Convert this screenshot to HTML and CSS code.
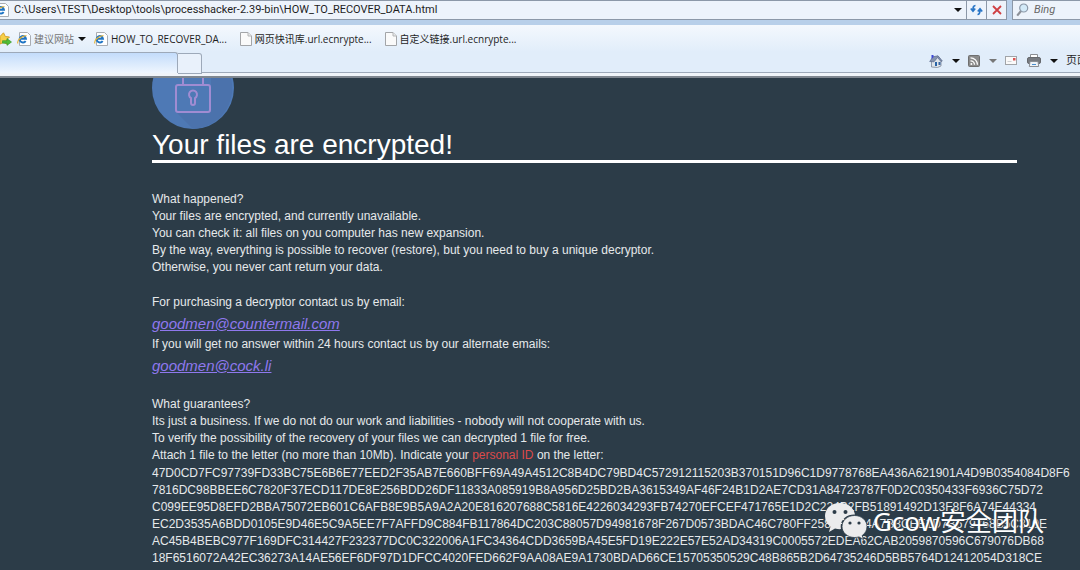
FILE: index.html
```html
<!DOCTYPE html>
<html lang="en">
<head>
<meta charset="utf-8">
<title>HOW_TO_RECOVER_DATA.html</title>
<link rel="stylesheet" href="styles.css">
</head>
<body>
<svg class="defs" aria-hidden="true">
  <defs>
    <symbol id="ie" viewBox="0 0 14 14">
      <path d="M2.500 .5h8l3 3v10h-11z" fill="#fff" stroke="#a9adb3"/>
      <path d="M8.600 8.900a3.200 3.200 0 1 1 .4-2.100H3.200" fill="none" stroke="#1f74c4" stroke-width="1.900"/>
      <path d="M1 11.500C-.5 9 4 4 9.500 3.500" fill="none" stroke="#e8b535" stroke-width="1.100"/>
    </symbol>
    <symbol id="page" viewBox="0 0 12 14">
      <path d="M.5.5h7.500l3.500 3.500v9.500H.5z" fill="#fafafa" stroke="#a3a5a8"/>
      <path d="M8 .5V4h3.500" fill="#e9e9e9" stroke="#b4b6b8"/>
    </symbol>
  </defs>
</svg>
<header class="browser">
  <div class="address-row">
    <div class="address">
      <svg class="ie"><use href="#ie"/></svg>
      <input class="url" type="text" aria-label="Address" value="C:\Users\TEST\Desktop\tools\processhacker-2.39-bin\HOW_TO_RECOVER_DATA.html">
      <button class="drop" aria-label="Show history"><i class="arrow"></i></button>
      <button class="nav" aria-label="Refresh"><svg width="13" height="12" viewBox="0 0 13 12"><path d="M5.500 1.500C3.500 1.500 3 3 3 6M.8 4.500 3 7.200l2.200-2.700M7.500 10.500c2 0 2.500-1.500 2.500-4.500M7.800 7.500 10 4.800l2.200 2.700" fill="none" stroke="#2a76c6" stroke-width="1.700"/></svg></button>
      <button class="nav" aria-label="Stop"><svg width="10" height="10" viewBox="0 0 10 10"><path d="M1 1l8 8M9 1 1 9" stroke="#cf3f42" stroke-width="1.800"/></svg></button>
    </div>
    <div class="search">
      <svg width="13" height="14" viewBox="0 0 13 14"><path d="M5 8 1.200 12.600" stroke="#8d9198" stroke-width="2.200"/><circle cx="7.700" cy="5" r="4" fill="#d3eaf8" stroke="#8c98a8" stroke-width="1.200"/></svg>
      <input class="query" type="text" aria-label="Search" placeholder="Bing">
    </div>
  </div>
  <nav class="favorites">
    <svg class="star" width="12" height="14" viewBox="0 0 12 14"><path d="M3.500.8 5.300 4.500l4.200.5-3 3 .7 4.200L3.500 10.300 0 12V4.500z" fill="#f7d048" stroke="#d5a12b"/><path d="M2.500 8.700h4.500V6.500L11.500 10 7 13.400v-2.200H2.500z" fill="#52bd37" stroke="#30932a" stroke-width=".6"/></svg>
    <button class="fav suggested"><svg class="ie"><use href="#ie"/></svg><span lang="zh">建议网站</span><i class="arrow"></i></button>
    <button class="fav current"><svg class="ie"><use href="#ie"/></svg>HOW_TO_RECOVER_DA...</button>
    <button class="fav feed"><svg class="page"><use href="#page"/></svg>网页快讯库.url.ecnrypte...</button>
    <button class="fav"><svg class="page"><use href="#page"/></svg>自定义链接.url.ecnrypte...</button>
  </nav>
  <div class="tab-row">
    <button class="tab" aria-label="Current tab"></button>
    <button class="new-tab" aria-label="New tab"></button>
    <div class="commands">
      <button class="cmd" aria-label="Home"><svg width="14" height="14" viewBox="0 0 14 14"><path d="M2.500 7v6l6 .5 3.500-1.500V6L9 2z" fill="#dfe4ea" stroke="#7c8698" stroke-width=".8"/><path d="M.7 7.500 4 2.800l5-1L13.300 7 12 7.500 8.500 3.500 5 7.800z" fill="#8593ae" stroke="#59698c" stroke-width=".7"/><path d="M2.500 5V1h2v2" fill="#3a45d6"/><path d="M6 8h2v4H6z" fill="#2963a6"/><path d="M9.500 8h2v3h-2z" fill="#3b65a0"/></svg></button>
      <button class="cmd more" aria-label="Home options"><i class="arrow"></i></button>
      <button class="cmd" aria-label="Feeds"><svg width="12" height="12" viewBox="0 0 12 12"><rect x=".5" y=".5" width="11" height="11" rx="1" fill="#8b8b8b" stroke="#6f6f6f"/><path d="M2.500 5.800a4 4 0 0 1 4 4M2.500 2.800a7 7 0 0 1 7 7" fill="none" stroke="#fff" stroke-width="1.300"/><circle cx="3.400" cy="8.900" r="1" fill="#fff"/></svg></button>
      <button class="cmd more muted" aria-label="Feed options"><i class="arrow"></i></button>
      <button class="cmd mail" aria-label="Read mail"><svg width="12" height="9" viewBox="0 0 12 9"><rect x=".5" y=".5" width="11" height="8" fill="#fafafa" stroke="#a1a4a8"/><path d="M8 2h2.500v2.500H8z" fill="#dc5151"/><path d="M2.500 5.500h4" stroke="#cfd1d4"/></svg></button>
      <button class="cmd" aria-label="Print"><svg width="14" height="13" viewBox="0 0 14 13"><path d="M3.500 4V.5h7V4" fill="#fff" stroke="#8b8e93"/><rect x=".5" y="3.500" width="13" height="6" rx="1.500" fill="#777b81" stroke="#66696e"/><path d="M3 7.500h8l.7 5H2.300z" fill="#eef3f8" stroke="#8b8e93"/><path d="M5 10.500h4" stroke="#4a8fd0"/></svg></button>
      <button class="cmd more" aria-label="Print options"><i class="arrow"></i></button>
      <button class="cmd menu" lang="zh">页面</button>
    </div>
  </div>
</header>
<main class="note">
  <svg class="lock" width="82" height="51" viewBox="0 0 82 51" aria-hidden="true">
    <circle cx="41" cy="10" r="41" fill="#4e79b5"/>
    <path d="M59 0h20a41 41 0 0 1-38 51L24 34h35z" fill="#4b72ac"/>
    <g fill="none" stroke="#a08cd2" stroke-width="2"><rect x="24" y="7" width="34" height="27" rx="2"/><path d="M31 7V0M51 7V0"/><path d="M39 20a4 4 0 1 1 4 0v5a2 2 0 0 1-4 0z"/></g>
  </svg>
  <h1 class="title">Your files are encrypted!</h1>
  <p class="block">What happened?<br>Your files are encrypted, and currently unavailable.<br>You can check it: all files on you computer has new expansion.<br>By the way, everything is possible to recover (restore), but you need to buy a unique decryptor.<br>Otherwise, you never cant return your data.</p>
  <p class="block">For purchasing a decryptor contact us by email:
    <a class="email" href="#">goodmen@countermail.com</a>
    If you will get no answer within 24 hours contact us by our alternate emails:
    <a class="email" href="#">goodmen@cock.li</a></p>
  <p class="block">What guarantees?<br>Its just a business. If we do not do our work and liabilities - nobody will not cooperate with us.<br>To verify the possibility of the recovery of your files we can decrypted 1 file for free.<br>Attach 1 file to the letter (no more than 10Mb). Indicate your <span class="id-label">personal ID</span> on the letter:</p>
  <p class="personal-id">47D0CD7FC97739FD33BC75E6B6E77EED2F35AB7E660BFF69A49A4512C8B4DC79BD4C572912115203B370151D96C1D9778768EA436A621901A4D9B0354084D8F6<br>7816DC98BBEE6C7820F37ECD117DE8E256BDD26DF11833A085919B8A956D25BD2BA3615349AF46F24B1D2AE7CD31A84723787F0D2C0350433F6936C75D72<br>C099EE95D8EFD2BBA75072EB601C6AFB8E9B5A9A2A20E816207688C5816E4226034293FB74270EFCEF471765E1D2C224B2FB51891492D13F8F6A74E44334<br>EC2D3535A6BDD0105E9D46E5C9A5EE7F7AFFD9C884FB117864DC203C88057D94981678F267D0573BDAC46C780FF2584F2594A7B8CEE1D7B679768B5C310E<br>AC45B4BEBC977F169DFC314427F232377DC0C322006A1FC34364CDD3659BA45E5FD19E222E57E52AD34319C0005572EDEA62CAB2059870596C679076DB68<br>18F6516072A42EC36273A14AE56EF6DF97D1DFCC4020FED662F9AA08AE9A1730BDAD66CE15705350529C48B865B2D64735246D5BB5764D12412054D318CE</p>
</main>
<div class="watermark">
  <svg width="42" height="37" viewBox="0 0 42 37" aria-hidden="true">
    <path d="M15 0C6.500 0 0 5.500 0 13c0 4.500 2.200 8 5.500 10.500L4 29l6-3.500c2 .5 4 .7 6 .6C14 17 22 11 30 11.500 28.500 4 22.500 0 15 0z" fill="#ebeced"/>
    <path d="M29.500 12.500c-7 0-12.500 4.800-12.500 11s5.500 11 12.500 11c1.500 0 3-.2 4.500-.6l4.500 2.600-1.300-4c3-2 4.800-5.200 4.800-9 0-6.200-5.500-11-12.500-11z" fill="#ebeced" stroke="#2c3c48" stroke-width=".8"/>
    <g fill="#2c3c48"><circle cx="9.500" cy="9" r="2"/><circle cx="20.500" cy="9" r="2"/><circle cx="25" cy="20" r="1.600"/><circle cx="34" cy="20" r="1.600"/></g>
  </svg>
  <span>Gcow安全团队</span>
</div>
</body>
</html>
```

FILE: styles.css
```css
* { box-sizing: border-box; }
body {
  margin: 0;
  height: 100vh;
  overflow: hidden;
  background: #2c3c48;
  font-family: "Liberation Sans", "Noto Sans CJK SC", sans-serif;
}
button, input {
  margin: 0;
  padding: 0;
  border: 0;
  background: none;
  color: #1e1e1e;
  font: 11px/16px Roboto, "Noto Sans CJK SC", sans-serif;
}
button { display: flex; align-items: center; white-space: nowrap; }
svg { display: block; flex: none; }
.defs { position: absolute; width: 0; height: 0; }
.arrow {
  border: 4px solid transparent;
  border-top-color: #111;
  border-bottom: 0;
}

.browser { background: #e1edfa; border-bottom: 2px solid #7f8790; }
.address-row {
  display: flex;
  gap: 5px;
  height: 25px;
  padding-bottom: 5px;
  background: #b8cfe9;
}
.address, .search {
  display: flex;
  align-items: center;
  background: #edf3fb;
  border: 1px solid #8c98a8;
  border-left: 0;
}
.address { flex: 1; }
.ie { width: 14px; height: 14px; }
.address .ie { margin-left: -5px; }
.url { flex: 1; min-width: 0; margin-left: 5px; }
.drop { width: 16px; height: 100%; justify-content: center; }
.nav {
  width: 20px;
  height: 100%;
  justify-content: center;
  border-left: 1px solid #8c98a8;
}
.search { width: 68px; gap: 5px; padding-left: 3px; border-left: 1px solid #8c98a8; border-right: 0; }
.query { flex: 1; min-width: 0; font-style: italic; }
.query::placeholder { color: #666; opacity: 1; }

.favorites {
  display: flex;
  align-items: center;
  height: 27px;
  background: linear-gradient(#f4f8fd, #e1edfa);
}
.star { margin-right: 5px; }
.fav { gap: 3px; font-family: "Open Sans", "Noto Sans CJK SC", sans-serif; font-size: 10px; }
.suggested { margin-right: 8px; color: #777; }
.suggested .arrow { margin-left: 1px; }
.current, .feed { margin-right: 13px; }
.page { width: 12px; height: 14px; }

.tab-row { display: flex; height: 24px; border-bottom: 3px solid #f0f4f9; }
.tab {
  width: 178px;
  border: 1px solid #9da9b9;
  border-left: 0;
  border-bottom: 0;
  border-radius: 0 3px 0 0;
  background: linear-gradient(#c3dcfb, #eff6fe);
}
.new-tab {
  width: 24px;
  height: 21px;
  margin-top: 1px;
  border: 1px solid #9da9b9;
  border-left: 0;
  border-radius: 0 3px 0 0;
  background: #e9f1fb;
}
.commands {
  display: flex;
  flex: 1;
  align-items: center;
  justify-content: flex-end;
  padding-bottom: 3px;
  border-bottom: 1px solid #9da9b9;
  overflow: hidden;
}
.more { width: 25px; justify-content: center; }
.muted .arrow { border-top-color: #777; }
.mail { margin-right: 10px; }
.menu { width: 14px; }

.note {
  margin: 0 36px 0 152px;
  color: #e6e9eb;
  font-size: 12px;
  line-height: 17px;
}
.title {
  margin: 0 27px 28px 0;
  border-bottom: 3px solid #fff;
  color: #fff;
  font-size: 28px;
  font-weight: 400;
  line-height: 31px;
}
.block { margin: 0 0 18px; }
.email {
  display: table;
  color: #8f78ee;
  font-size: 15px;
  font-style: italic;
  line-height: 25px;
}
.id-label { color: #dc4a4a; }
.personal-id { margin: -17px 0 0; white-space: nowrap; }

.watermark {
  position: absolute;
  right: 36px;
  bottom: 30px;
  display: flex;
  align-items: center;
  gap: 6px;
  color: #fff;
  font: 26px/37px "Noto Sans", "Noto Sans CJK SC", sans-serif;
  text-shadow: 1px 1px 1px #2c3c48;
}
```
